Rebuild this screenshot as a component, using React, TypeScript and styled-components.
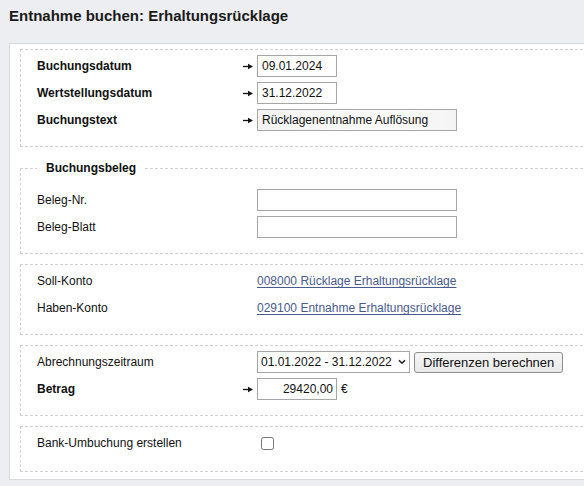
import React from "react";
import styled, { createGlobalStyle } from "styled-components";

const GlobalStyle = createGlobalStyle`
  html, body {
    margin: 0;
    padding: 0;
    overflow: hidden;
    background: #eceef1;
  }
  body {
    font-family: "Liberation Sans", Arial, Helvetica, sans-serif;
    font-size: 12px;
    color: #111;
  }
`;

const Page = styled.div`
  width: 584px;
  height: 486px;
`;

const Title = styled.h1`
  margin: 0;
  padding: 7px 9px 0;
  font-size: 15px;
  line-height: 17px;
  font-weight: bold;
  color: #1a1a1a;
`;

const Panel = styled.div`
  margin: 19px -30px 0 9px;
  padding: 5px 10px 7px;
  background: #fff;
  border: 1px solid #d6d9de;
`;

const Group = styled.fieldset<{ $top?: number }>`
  margin: 0 0 10px;
  padding: ${(p) => p.$top ?? 5}px 16px 15px;
  border: 1px dashed #cfd1d6;
  min-width: 0;

  &:last-child {
    margin-bottom: 0;
    padding-bottom: 17px;
  }
`;

const Legend = styled.legend`
  padding: 0 9px;
  font-weight: bold;
  font-size: 12px;
  line-height: 22px;
`;

const Row = styled.div`
  display: grid;
  grid-template-columns: 206px 14px auto;
  align-items: center;
  height: 22px;

  & + & {
    margin-top: 5px;
  }
`;

const Label = styled.span<{ $bold?: boolean }>`
  font-weight: ${(p) => (p.$bold ? "bold" : "normal")};
`;

const ArrowCell = styled.span`
  display: flex;
  align-items: center;
  height: 22px;
`;

const Field = styled.div`
  display: flex;
  align-items: center;
  gap: 4px;
`;

const TextInput = styled.input<{ $w: number; $right?: boolean; $shade?: boolean }>`
  box-sizing: border-box;
  width: ${(p) => p.$w}px;
  height: 22px;
  margin: 0;
  padding: 0 ${(p) => (p.$right ? 3 : 4)}px 0 4px;
  border: 1px solid #a6a6a6;
  border-radius: 0;
  font-family: "Liberation Sans", Arial, sans-serif;
  font-size: 12px;
  color: #111;
  text-align: ${(p) => (p.$right ? "right" : "left")};
  background: ${(p) =>
    p.$shade ? "linear-gradient(to right, #f3f3f3, #fcfcfc 65%, #f4f4f4)" : "#fff"};
  outline: none;
`;

const AccountLink = styled.a`
  color: #4a5a8c;
  text-decoration: underline;
  text-underline-offset: 2px;
`;

const SelectWrap = styled.div`
  position: relative;
  display: inline-flex;
`;

const Select = styled.select`
  box-sizing: border-box;
  appearance: none;
  width: 153px;
  height: 22px;
  margin: 0;
  padding: 0 16px 0 3px;
  border: 1px solid #a6a6a6;
  border-radius: 0;
  background: #fff;
  font-family: "Liberation Sans", Arial, sans-serif;
  font-size: 12px;
  color: #111;
`;

const Chevron = styled.svg`
  position: absolute;
  right: 4px;
  top: 8px;
  pointer-events: none;
`;

const Button = styled.button`
  box-sizing: border-box;
  height: 21px;
  margin: 0;
  padding: 0 8px;
  border: 1px solid #8e8e8e;
  border-radius: 3px;
  background: linear-gradient(#f6f6f6, #e9e9e9);
  font-family: "Liberation Sans", Arial, sans-serif;
  font-size: 13px;
  color: #111;
`;

const Check = styled.input`
  width: 13px;
  height: 13px;
  margin: 0 0 0 4px;
`;

function Arrow() {
  return (
    <ArrowCell>
      <svg width="10" height="7" viewBox="0 0 10 7">
        <path d="M0 3.5 H7" stroke="#111" strokeWidth="1.3" />
        <polygon points="5,0.8 10,3.5 5,6.2" fill="#111" />
      </svg>
    </ArrowCell>
  );
}

export default function App() {
  return (
    <Page>
      <GlobalStyle />
      <Title>Entnahme buchen: Erhaltungsrücklage</Title>
      <Panel>
        <Group>
          <Row>
            <Label $bold>Buchungsdatum</Label>
            <Arrow />
            <Field>
              <TextInput $w={80} defaultValue="09.01.2024" />
            </Field>
          </Row>
          <Row>
            <Label $bold>Wertstellungsdatum</Label>
            <Arrow />
            <Field>
              <TextInput $w={80} defaultValue="31.12.2022" />
            </Field>
          </Row>
          <Row>
            <Label $bold>Buchungstext</Label>
            <Arrow />
            <Field>
              <TextInput $w={200} $shade defaultValue="Rücklagenentnahme Auflösung" />
            </Field>
          </Row>
        </Group>

        <Group $top={10}>
          <Legend>Buchungsbeleg</Legend>
          <Row>
            <Label>Beleg-Nr.</Label>
            <span />
            <Field>
              <TextInput $w={200} />
            </Field>
          </Row>
          <Row>
            <Label>Beleg-Blatt</Label>
            <span />
            <Field>
              <TextInput $w={200} />
            </Field>
          </Row>
        </Group>

        <Group>
          <Row>
            <Label>Soll-Konto</Label>
            <span />
            <Field>
              <AccountLink href="#">008000 Rücklage Erhaltungsrücklage</AccountLink>
            </Field>
          </Row>
          <Row>
            <Label>Haben-Konto</Label>
            <span />
            <Field>
              <AccountLink href="#">029100 Entnahme Erhaltungsrücklage</AccountLink>
            </Field>
          </Row>
        </Group>

        <Group>
          <Row>
            <Label>Abrechnungszeitraum</Label>
            <span />
            <Field>
              <SelectWrap>
                <Select defaultValue="2022">
                  <option value="2022">01.01.2022 - 31.12.2022</option>
                </Select>
                <Chevron width="8" height="6" viewBox="0 0 8 6">
                  <path d="M1 1.2 L4 4.2 L7 1.2" fill="none" stroke="#222" strokeWidth="1.6" />
                </Chevron>
              </SelectWrap>
              <Button type="button">Differenzen berechnen</Button>
            </Field>
          </Row>
          <Row>
            <Label $bold>Betrag</Label>
            <Arrow />
            <Field>
              <TextInput $w={80} $right defaultValue="29420,00" />
              <span>€</span>
            </Field>
          </Row>
        </Group>

        <Group>
          <Row>
            <Label>Bank-Umbuchung erstellen</Label>
            <span />
            <Field>
              <Check type="checkbox" />
            </Field>
          </Row>
        </Group>
      </Panel>
    </Page>
  );
}
